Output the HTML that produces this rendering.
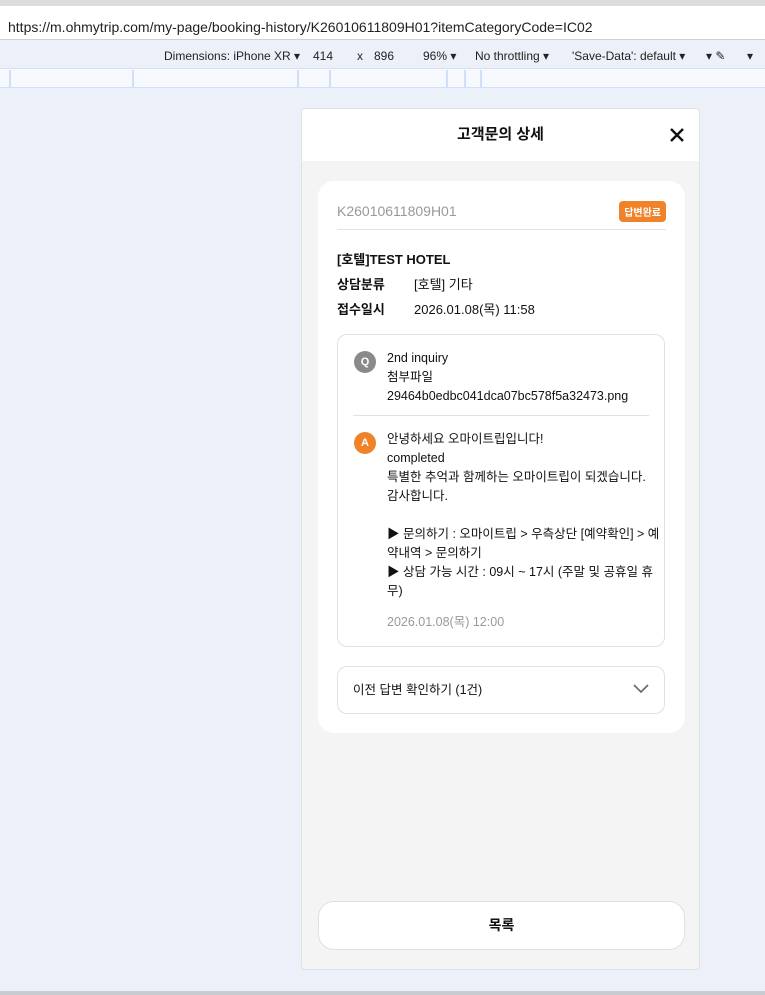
<!DOCTYPE html>
<html><head><meta charset="utf-8"><style>
*{box-sizing:border-box;margin:0;padding:0}
body{width:765px;height:995px;overflow:hidden;background:#ecf0f8;font-family:"Liberation Sans","Noto Sans CJK KR",sans-serif;color:#111;position:relative}
.top{position:absolute;left:0;top:0;width:765px;height:40px;background:#fff;border-top:6px solid #dcdcdc;border-bottom:1px solid #d0d0d0}
.url{position:absolute;left:8px;top:13px;font-size:14px;color:#222}
.dev{position:absolute;left:0;top:41px;width:765px;height:27px;background:#ecf0f8;font-size:12px;color:#222}
.dev span{position:absolute;top:8px}
.ruler{position:absolute;left:0;top:68px;width:765px;height:20px;background:#f7f9fe;border-top:1px solid #cfe0fb;border-bottom:1px solid #cfe0fb}
.ruler i{position:absolute;top:1px;width:2px;height:17px;background:#cfe0fb}
.phone{position:absolute;left:301px;top:108px;width:399px;height:862px;background:#f4f4f4;border:1px solid #e2e2e2;border-radius:4px;overflow:hidden}
.hdr{height:52px;background:#fff;text-align:center;font-size:15px;font-weight:bold;line-height:52px;position:relative}
.card{position:absolute;left:16px;top:72px;width:367px;height:552px;background:#fff;border-radius:16px;padding:0 19px}
.num{position:absolute;left:19px;top:22px;font-size:14px;color:#999}
.badge{position:absolute;right:19px;top:20px;background:#f0832a;color:#fff;font-size:10px;padding:3px 5px;border-radius:4px;font-weight:bold}
.hr1{position:absolute;left:19px;right:19px;top:48px;height:1px;background:#e2e2e2}
.t{position:absolute;left:19px;font-size:13px}
.box{position:absolute;left:19px;top:153px;width:328px;height:313px;border:1px solid #e0e0e0;border-radius:10px}
.ic{position:absolute;left:16px;width:22px;height:22px;border-radius:50%;color:#fff;font-size:11px;font-weight:bold;text-align:center;line-height:22px}
.txt{position:absolute;left:49px;font-size:12.5px;line-height:19px;color:#111;white-space:nowrap}
.prev{position:absolute;left:19px;top:485px;width:328px;height:48px;border:1px solid #e0e0e0;border-radius:10px;font-size:12.5px;line-height:46px;padding-left:15px}
.btn{position:absolute;left:16px;top:792px;width:367px;height:49px;background:#fff;border:1px solid #e0e0e0;border-radius:16px;text-align:center;line-height:47px;font-size:14px;font-weight:bold}
.bot{position:absolute;left:0;top:991px;width:765px;height:4px;background:#c8ccd0}
</style></head><body>
<div class="top"><div class="url">https://m.ohmytrip.com/my-page/booking-history/K26010611809H01?itemCategoryCode=IC02</div></div>
<div class="dev">
<span style="left:164px">Dimensions: iPhone XR ▾</span>
<span style="left:313px">414</span><span style="left:357px">x</span><span style="left:374px">896</span>
<span style="left:423px">96% ▾</span><span style="left:475px">No throttling ▾</span>
<span style="left:572px">'Save-Data': default ▾</span><span style="left:706px">▾ ✎</span><span style="left:747px">▾</span>
</div>
<div class="ruler"><i style="left:9px"></i><i style="left:132px"></i><i style="left:297px"></i><i style="left:329px"></i><i style="left:446px"></i><i style="left:464px"></i><i style="left:480px"></i></div>
<div class="phone">
<div class="hdr">고객문의 상세
<svg style="position:absolute;right:14px;top:18px" width="16" height="16" viewBox="0 0 16 16"><path d="M2 2L14 14M14 2L2 14" stroke="#111" stroke-width="2.4"/></svg></div>
<div class="card">
<div class="num">K26010611809H01</div><div class="badge">답변완료</div><div class="hr1"></div>
<div class="t" style="top:68px;font-weight:bold">[호텔]TEST HOTEL</div>
<div class="t" style="top:93px;font-weight:bold">상담분류</div><div class="t" style="top:93px;left:96px">[호텔] 기타</div>
<div class="t" style="top:118px;font-weight:bold">접수일시</div><div class="t" style="top:118px;left:96px">2026.01.08(목) 11:58</div>
<div class="box">
<div class="ic" style="top:16px;background:#8a8a8a">Q</div>
<div class="txt" style="top:14px">2nd inquiry<br>첨부파일<br>29464b0edbc041dca07bc578f5a32473.png</div>
<div style="position:absolute;left:15px;right:15px;top:80px;height:1px;background:#e2e2e2"></div>
<div class="ic" style="top:97px;background:#f0832a">A</div>
<div class="txt" style="top:95px">안녕하세요 오마이트립입니다!<br>completed<br>특별한 추억과 함께하는 오마이트립이 되겠습니다.<br>감사합니다.<br><br>▶ 문의하기 : 오마이트립 &gt; 우측상단 [예약확인] &gt; 예<br>약내역 &gt; 문의하기<br>▶ 상담 가능 시간 : 09시 ~ 17시 (주말 및 공휴일 휴<br>무)</div>
<div class="txt" style="top:278px;color:#999">2026.01.08(목) 12:00</div>
</div>
<div class="prev">이전 답변 확인하기 (1건)
<svg style="position:absolute;right:15px;top:17px" width="16" height="10" viewBox="0 0 16 10"><path d="M1 1L8 8L15 1" stroke="#666" stroke-width="1.6" fill="none"/></svg></div>
</div>
<div class="btn">목록</div>
</div>
<div class="bot"></div>
</body></html>
